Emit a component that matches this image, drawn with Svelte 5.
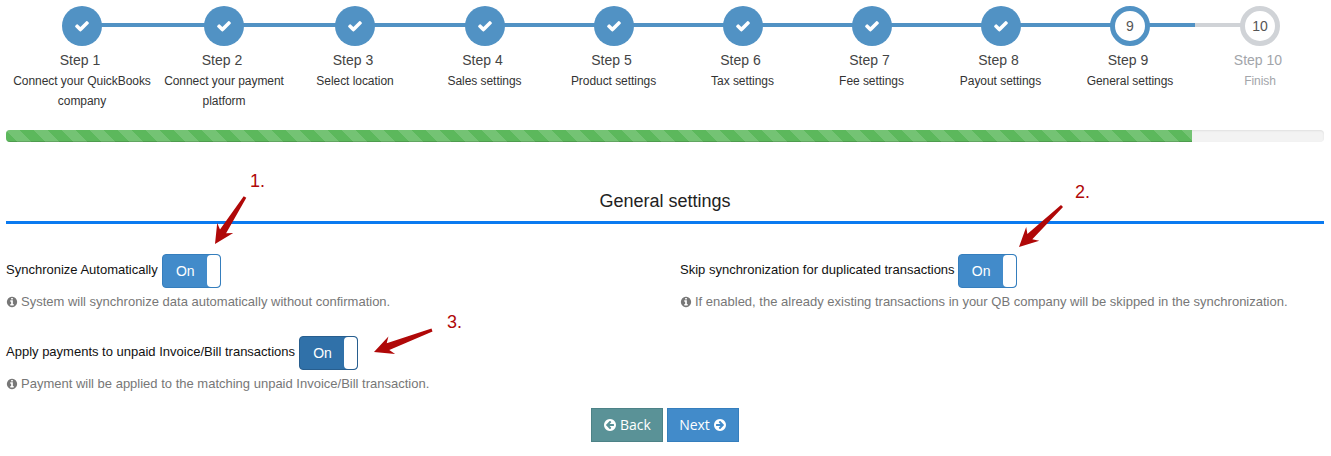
<script>
	const steps = [
		{ label: 'Step 1', sub: 'Connect your QuickBooks company' },
		{ label: 'Step 2', sub: 'Connect your payment platform' },
		{ label: 'Step 3', sub: 'Select location' },
		{ label: 'Step 4', sub: 'Sales settings' },
		{ label: 'Step 5', sub: 'Product settings' },
		{ label: 'Step 6', sub: 'Tax settings' },
		{ label: 'Step 7', sub: 'Fee settings' },
		{ label: 'Step 8', sub: 'Payout settings' },
		{ label: 'Step 9', sub: 'General settings' },
		{ label: 'Step 10', sub: 'Finish' }
	];
	const current = 8;

	// FontAwesome 4 glyph shapes, 1792 grid
	const icons = {
		check: 'M1671 566q0 40-28 68l-724 724-136 136q-28 28-68 28t-68-28l-136-136-362-362q-28-28-28-68t28-68l136-136q28-28 68-28t68 28l294 295 656-657q28-28 68-28t68 28l136 136q28 28 28 68z',
		info: 'M1152 1376v-160q0-14-9-23t-23-9h-96v-512q0-14-9-23t-23-9h-320q-14 0-23 9t-9 23v160q0 14 9 23t23 9h96v320h-96q-14 0-23 9t-9 23v160q0 14 9 23t23 9h448q14 0 23-9t9-23zm-128-896v-160q0-14-9-23t-23-9h-192q-14 0-23 9t-9 23v160q0 14 9 23t23 9h192q14 0 23-9t9-23zm640 416q0 209-103 385.500t-279.500 279.500-385.500 103-385.500-103-279.500-279.500-103-385.500 103-385.500 279.500-279.500 385.500-103 385.500 103 279.500 279.500 103 385.500z',
		left: 'M1408 960v-128q0-26-19-45t-45-19h-502l189-189q19-19 19-45t-19-45l-91-91q-18-18-45-18t-45 18l-362 362-91 91q-18 18-18 45t18 45l91 91 362 362q18 18 45 18t45-18l91-91q18-18 18-45t-18-45l-189-189h502q26 0 45-19t19-45zm256-64q0 209-103 385.500t-279.500 279.500-385.500 103-385.500-103-279.500-279.500-103-385.500 103-385.500 279.500-279.500 385.500-103 385.500 103 279.500 279.500 103 385.500z',
		right: 'M1413 896q0-27-18-45l-91-91-362-362q-18-18-45-18t-45 18l-91 91q-18 18-18 45t18 45l189 189h-502q-26 0-45 19t-19 45v128q0 26 19 45t45 19h502l-189 189q-19 19-19 45t19 45l91 91q18 18 45 18t45-18l362-362 91-91q18-18 18-45zm251 0q0 209-103 385.500t-279.500 279.500-385.500 103-385.500-103-279.500-279.500-103-385.500 103-385.500 279.500-279.500 385.500-103 385.500 103 279.500 279.500 103 385.500z'
	};

	// hand-drawn annotation arrows on top of the screenshot
	function arrowPoints([tx, ty], [hx, hy]) {
		const len = Math.hypot(hx - tx, hy - ty);
		const ux = (hx - tx) / len;
		const uy = (hy - ty) / len;
		const at = (back, side) => `${(hx - ux * back - uy * side).toFixed(1)},${(hy - uy * back + ux * side).toFixed(1)}`;
		return [
			at(0, 0),
			at(19, 9.5),
			at(15, 3.6),
			at(len, 1.5),
			at(len, -1.5),
			at(15, -3.6),
			at(19, -9.5)
		].join(' ');
	}
	const arrows = [
		{ tail: [245, 197], tip: [215, 244] },
		{ tail: [1062, 206], tip: [1019, 247] },
		{ tail: [432, 330], tip: [374, 352] }
	];
	const notes = [
		{ n: '1.', cls: 'n1' },
		{ n: '2.', cls: 'n2' },
		{ n: '3.', cls: 'n3' }
	];
</script>

{#snippet toggle(dark)}
	<span class="toggle" class:dark>
		<span class="on">On</span>
		<span class="handle"></span>
	</span>
{/snippet}

{#snippet hint(text)}
	<p class="hint">
		<svg viewBox="0 0 1792 1792" width="12" height="12" aria-hidden="true"><path d={icons.info} /></svg>
		{text}
	</p>
{/snippet}

<div class="page">
	<ol class="wizard">
		{#each steps as s, i}
			<li class="step" class:todo={i > current} class:now={i === current} class:first={i === 0} class:last={i === steps.length - 1}>
				<span class="bubble">
					{#if i < current}
						<svg viewBox="0 0 1792 1792" width="16" height="16" aria-hidden="true"><path d={icons.check} /></svg>
					{:else}
						{i + 1}
					{/if}
				</span>
				<span class="name">{s.label}</span>
				<span class="sub">{s.sub}</span>
			</li>
		{/each}
	</ol>

	<div class="progress"><div class="bar"></div></div>

	<h4 class="title">General settings</h4>

	<div class="settings">
		<div class="field">
			<div class="row"><span class="lbl">Synchronize Automatically</span>{@render toggle(false)}</div>
			{@render hint('System will synchronize data automatically without confirmation.')}
		</div>
		<div class="field">
			<div class="row tight"><span class="lbl">Skip synchronization for duplicated transactions</span>{@render toggle(false)}</div>
			{@render hint('If enabled, the already existing transactions in your QB company will be skipped in the synchronization.')}
		</div>
		<div class="field">
			<div class="row"><span class="lbl">Apply payments to unpaid Invoice/Bill transactions</span>{@render toggle(true)}</div>
			{@render hint('Payment will be applied to the matching unpaid Invoice/Bill transaction.')}
		</div>
	</div>

	<div class="actions">
		<button class="btn back" type="button">
			<svg viewBox="0 0 1792 1792" width="14" height="14" aria-hidden="true"><path d={icons.left} /></svg>
			Back
		</button>
		<button class="btn next" type="button">
			Next
			<svg viewBox="0 0 1792 1792" width="14" height="14" aria-hidden="true"><path d={icons.right} /></svg>
		</button>
	</div>

	<svg class="marks" width="1331" height="456" aria-hidden="true">
		{#each arrows as a}
			<polygon points={arrowPoints(a.tail, a.tip)} />
		{/each}
	</svg>
	{#each notes as note}
		<span class="note {note.cls}">{note.n}</span>
	{/each}
</div>

<style>
	:global(body) {
		margin: 0;
		background: #fff;
	}
	.page {
		position: relative;
		width: 1331px;
		height: 456px;
		box-sizing: border-box;
		padding: 6px 7px 0 6px;
		overflow: hidden;
		font-family: 'Liberation Sans', Arial, sans-serif;
		font-size: 13px;
		color: #333;
	}
	.wizard {
		display: grid;
		grid-template-columns: 152px 132px 130px repeat(5, 129px) 130px 130px;
		margin: 0;
		padding: 0;
		list-style: none;
	}
	.step {
		position: relative;
		display: flex;
		flex-direction: column;
		align-items: center;
		text-align: center;
		padding: 0 5px;
		height: 124px;
		box-sizing: border-box;
	}
	.step::before,
	.step::after {
		content: '';
		position: absolute;
		top: 17px;
		height: 4px;
		width: 50%;
		background: #5192c4;
	}
	.step::before {
		left: 0;
	}
	.step::after {
		left: 50%;
	}
	.step.first::before,
	.step.last::after {
		display: none;
	}
	.step.todo::before {
		background: #d0d3d7;
	}
	.bubble {
		position: relative;
		z-index: 1;
		display: flex;
		align-items: center;
		justify-content: center;
		width: 40px;
		height: 40px;
		border-radius: 50%;
		box-sizing: border-box;
		background: #5192c4;
		font-size: 14px;
		color: #555;
	}
	.bubble svg {
		fill: #fff;
	}
	.now .bubble {
		background: #fff;
		border: 5px solid #5192c4;
	}
	.todo .bubble {
		background: #fff;
		border: 5px solid #d0d3d7;
	}
	.name {
		margin-top: 4px;
		padding-right: 4px;
		font-size: 14px;
		line-height: 20px;
		color: #444;
	}
	.sub {
		margin-top: 1px;
		line-height: 20px;
		font-size: 12px;
		letter-spacing: -0.05px;
		color: #333;
	}
	.todo .name,
	.todo .sub {
		color: #a2a5aa;
	}
	.progress {
		height: 12px;
		background: #f3f3f3;
		border-radius: 4px;
		overflow: hidden;
		box-shadow: inset 0 1px 2px rgba(0, 0, 0, 0.08);
	}
	.bar {
		width: 90%;
		height: 100%;
		background-color: #5cb85c;
		background-image: linear-gradient(
			45deg,
			rgba(255, 255, 255, 0.15) 25%,
			transparent 25%,
			transparent 50%,
			rgba(255, 255, 255, 0.15) 50%,
			rgba(255, 255, 255, 0.15) 75%,
			transparent 75%,
			transparent
		);
		background-size: 28px 28px;
		box-shadow: inset 0 -1px 0 rgba(0, 0, 0, 0.15);
	}
	.title {
		margin: 49px 0 0;
		padding-bottom: 9px;
		border-bottom: 3px solid #0a7af0;
		font-size: 18px;
		font-weight: 400;
		line-height: 21px;
		text-align: center;
		color: #222;
	}
	.settings {
		display: grid;
		grid-template-columns: 674px 1fr;
		margin-top: 30px;
	}
	.field {
		height: 82px;
	}
	.row {
		display: flex;
		align-items: center;
		gap: 4px;
		height: 34px;
	}
	.row.tight {
		gap: 3px;
	}
	.lbl {
		color: #111;
		position: relative;
		top: -2px;
	}
	.toggle {
		position: relative;
		display: block;
		width: 59px;
		height: 34px;
		box-sizing: border-box;
		background: #428bca;
		border: 1px solid #357ebd;
		border-radius: 4px;
		color: #fff;
	}
	.toggle.dark {
		background: #3071a9;
		border-color: #285e8e;
	}
	.on {
		position: absolute;
		left: 1px;
		right: 13px;
		top: 0;
		line-height: 32px;
		text-align: center;
		font-size: 14px;
	}
	.handle {
		position: absolute;
		top: 0;
		right: 0;
		bottom: 0;
		width: 13px;
		background: #fff;
		border-radius: 4px;
	}
	.hint {
		display: flex;
		align-items: center;
		gap: 3px;
		margin: 6px 0 0;
		line-height: 16px;
		color: #777;
	}
	.hint svg {
		fill: #777;
	}
	.actions {
		display: flex;
		justify-content: center;
		gap: 4px;
		margin-top: -10px;
	}
	.btn {
		display: flex;
		align-items: center;
		justify-content: center;
		gap: 3px;
		width: 72px;
		height: 34px;
		padding: 0 0 2px;
		border: 1px solid;
		border-radius: 0;
		font-family: 'Open Sans', sans-serif;
		font-size: 14px;
		color: #fff;
	}
	.btn svg {
		fill: #fff;
		margin-top: 2px;
	}
	.back {
		background: #5a9297;
		border-color: #4d8287;
	}
	.next {
		background: #428bca;
		border-color: #357ebd;
	}
	.marks {
		position: absolute;
		left: 0;
		top: 0;
		pointer-events: none;
	}
	.marks polygon {
		fill: #b00808;
	}
	.note {
		position: absolute;
		font-size: 18px;
		line-height: 20px;
		color: #b00808;
	}
	.n1 {
		left: 250px;
		top: 171px;
	}
	.n2 {
		left: 1075px;
		top: 182px;
	}
	.n3 {
		left: 447px;
		top: 312px;
	}
</style>
